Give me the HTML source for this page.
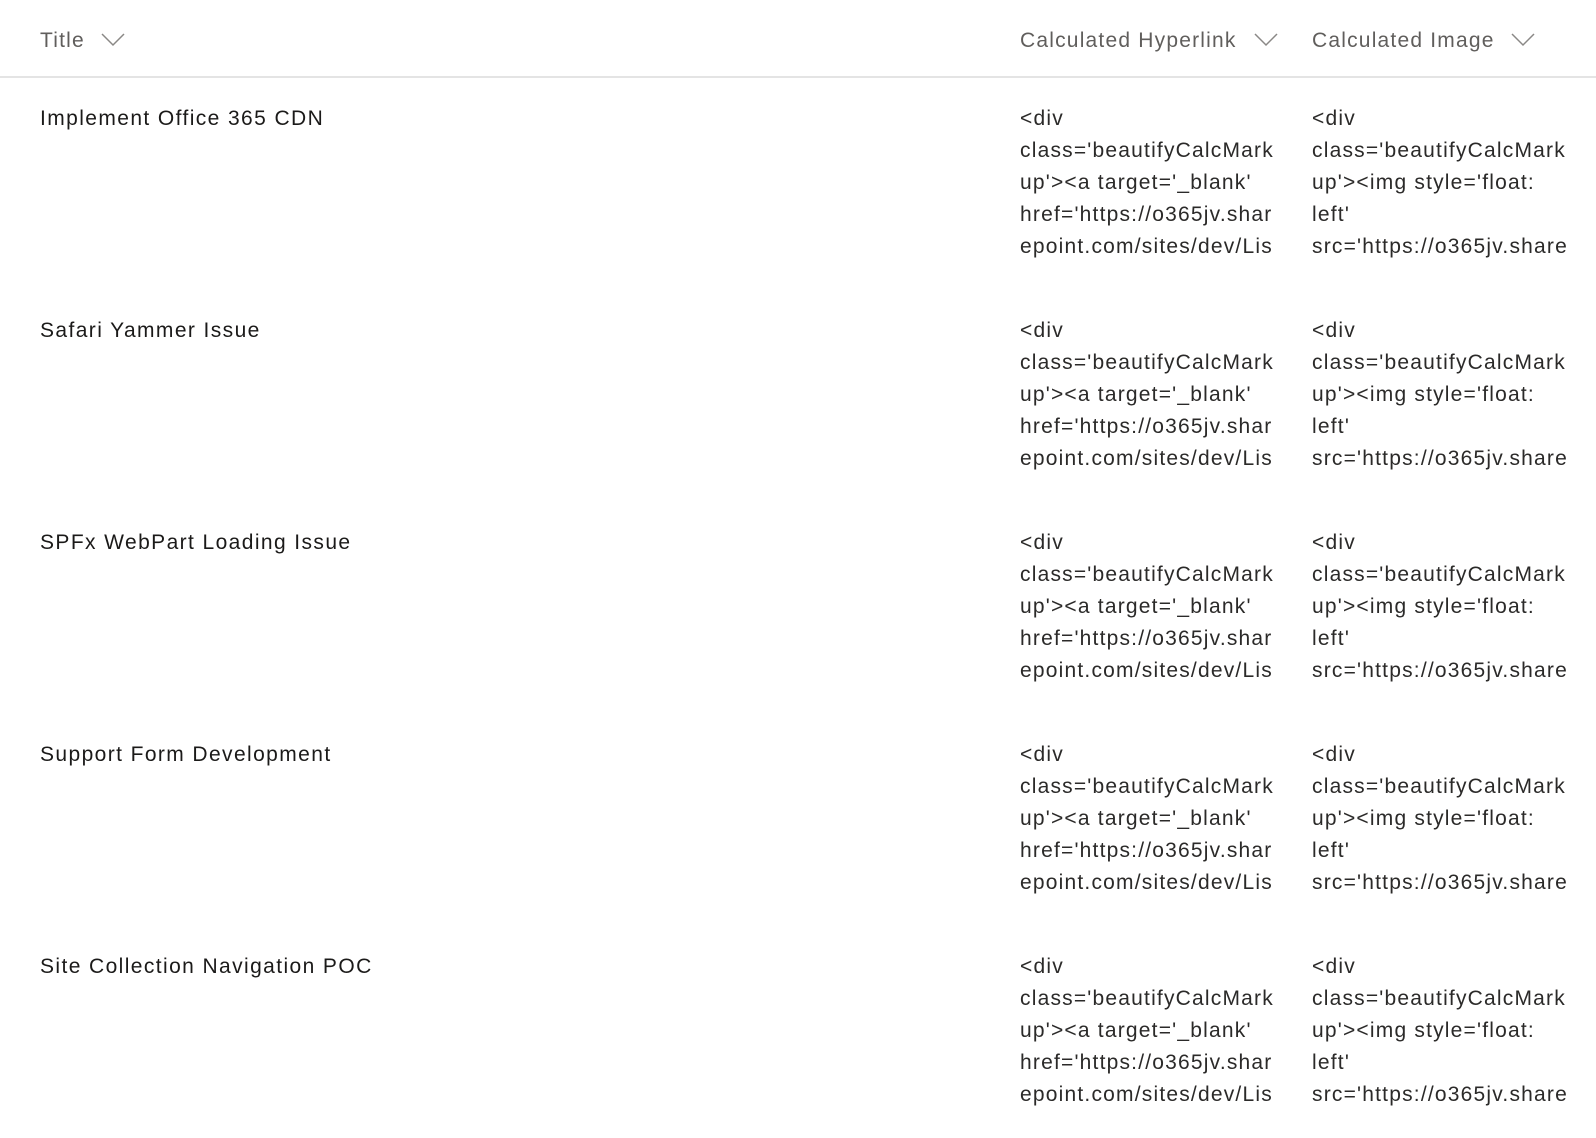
<!DOCTYPE html>
<html><head><meta charset="utf-8"><style>
body{margin:0;width:1596px;height:1138px;background:#fff;overflow:hidden;font-family:"Segoe UI","Liberation Sans",sans-serif;position:relative}
.h{position:absolute;top:27px;font-size:21px;color:#605e5c;white-space:nowrap;line-height:28px;letter-spacing:1.2px}
.chev{position:absolute;top:33px}
.div{position:absolute;left:0;top:76px;width:1596px;height:2px;background:#e4e4e4}
.t{position:absolute;left:40px;font-size:21px;color:#1b1a19;white-space:nowrap;line-height:32px;letter-spacing:1.4px}
.c{position:absolute;font-size:21px;color:#2b2a29;line-height:32px;white-space:pre;letter-spacing:1.2px}
</style></head><body>
<div class="h" style="left:40px">Title</div>
<svg class="chev" style="left:101px" width="24" height="14" viewBox="0 0 24 14"><path d="M1 1 L12 12 L23 1" fill="none" stroke="#8a8886" stroke-width="1.5"/></svg>
<div class="h" style="left:1020px">Calculated Hyperlink</div>
<svg class="chev" style="left:1254px" width="24" height="14" viewBox="0 0 24 14"><path d="M1 1 L12 12 L23 1" fill="none" stroke="#8a8886" stroke-width="1.5"/></svg>
<div class="h" style="left:1312px">Calculated Image</div>
<svg class="chev" style="left:1511px" width="24" height="14" viewBox="0 0 24 14"><path d="M1 1 L12 12 L23 1" fill="none" stroke="#8a8886" stroke-width="1.5"/></svg>
<div class="div"></div>

<div class="t" style="top:103px">Implement Office 365 CDN</div>
<div class="c" style="left:1020px;top:103px">&lt;div
class='beautifyCalcMark
up'&gt;&lt;a target='_blank'
href='https://o365jv.shar
epoint.com/sites/dev/Lis</div>
<div class="c" style="left:1312px;top:103px">&lt;div
class='beautifyCalcMark
up'&gt;&lt;img style='float:
left'
src='https://o365jv.share</div>

<div class="t" style="top:315px">Safari Yammer Issue</div>
<div class="c" style="left:1020px;top:315px">&lt;div
class='beautifyCalcMark
up'&gt;&lt;a target='_blank'
href='https://o365jv.shar
epoint.com/sites/dev/Lis</div>
<div class="c" style="left:1312px;top:315px">&lt;div
class='beautifyCalcMark
up'&gt;&lt;img style='float:
left'
src='https://o365jv.share</div>

<div class="t" style="top:527px">SPFx WebPart Loading Issue</div>
<div class="c" style="left:1020px;top:527px">&lt;div
class='beautifyCalcMark
up'&gt;&lt;a target='_blank'
href='https://o365jv.shar
epoint.com/sites/dev/Lis</div>
<div class="c" style="left:1312px;top:527px">&lt;div
class='beautifyCalcMark
up'&gt;&lt;img style='float:
left'
src='https://o365jv.share</div>

<div class="t" style="top:739px">Support Form Development</div>
<div class="c" style="left:1020px;top:739px">&lt;div
class='beautifyCalcMark
up'&gt;&lt;a target='_blank'
href='https://o365jv.shar
epoint.com/sites/dev/Lis</div>
<div class="c" style="left:1312px;top:739px">&lt;div
class='beautifyCalcMark
up'&gt;&lt;img style='float:
left'
src='https://o365jv.share</div>

<div class="t" style="top:951px">Site Collection Navigation POC</div>
<div class="c" style="left:1020px;top:951px">&lt;div
class='beautifyCalcMark
up'&gt;&lt;a target='_blank'
href='https://o365jv.shar
epoint.com/sites/dev/Lis</div>
<div class="c" style="left:1312px;top:951px">&lt;div
class='beautifyCalcMark
up'&gt;&lt;img style='float:
left'
src='https://o365jv.share</div>
</body></html>
